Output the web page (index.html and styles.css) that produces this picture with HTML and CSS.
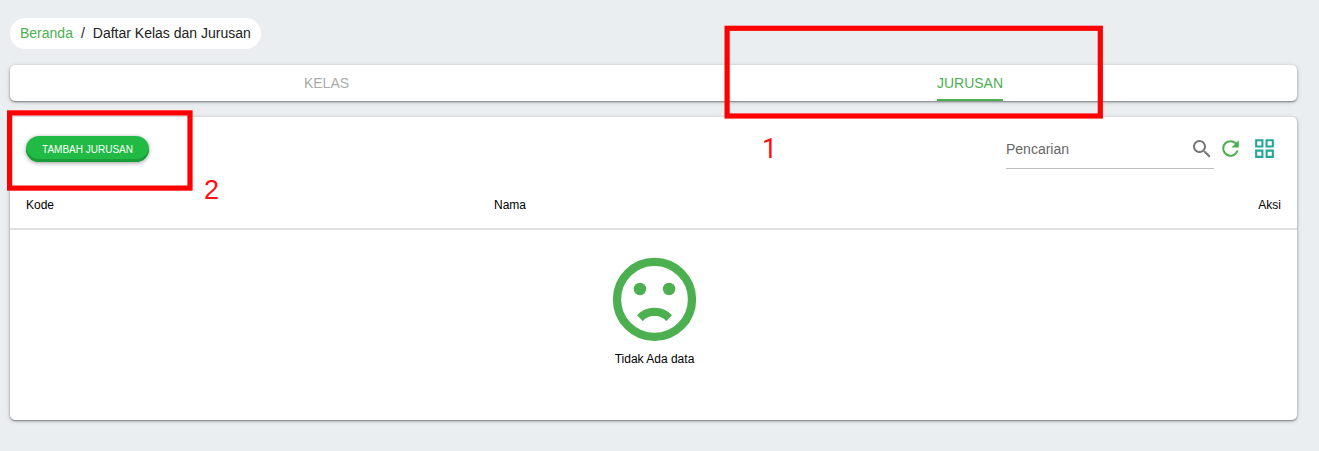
FILE: index.html
```html
<!DOCTYPE html>
<html lang="id">
<head>
<meta charset="utf-8">
<title>Daftar Kelas dan Jurusan</title>
<link rel="stylesheet" href="styles.css">
</head>
<body>
<main class="page">
  <nav class="breadcrumb"><a class="crumb-link">Beranda</a><span>/</span><span>Daftar Kelas dan Jurusan</span></nav>
  <div class="tabs panel">
    <div class="tab"><span class="tab-label">KELAS</span></div>
    <div class="tab"><span class="tab-label active">JURUSAN</span></div>
  </div>
  <section class="card panel">
    <div class="toolbar">
      <button class="add">TAMBAH JURUSAN</button>
      <div class="tools">
        <div class="search"><span>Pencarian</span>
          <svg class="icon" viewBox="0 0 24 24"><path d="M9.5 3A6.5 6.5 0 0 1 16 9.5C16 11.11 15.41 12.59 14.44 13.73L14.71 14H15.5L20.5 19L19 20.5L14 15.5V14.71L13.73 14.44A6.5 6.5 0 1 1 9.5 3M9.5 5A4.5 4.5 0 1 0 9.5 14A4.5 4.5 0 1 0 9.5 5Z"/></svg>
        </div>
        <svg class="icon refresh" viewBox="0 0 24 24"><path d="M17.65 6.35A7.96 7.96 0 0 0 12 4A8 8 0 1 0 19.73 14H17.65A6 6 0 1 1 12 6C13.66 6 15.14 6.69 16.22 7.78L13 11H20V4L17.65 6.35Z"/></svg>
        <svg class="icon grid" viewBox="0 0 24 24"><path d="M3 11H11V3H3M5 5H9V9H5M13 21H21V13H13M15 15H19V19H15M3 21H11V13H3M5 15H9V19H5M13 3V11H21V3M19 9H15V5H19Z" fill-rule="evenodd"/></svg>
      </div>
    </div>
    <div class="table-head"><span>Kode</span><span>Nama</span><span>Aksi</span></div>
    <div class="empty">
      <svg class="sad" viewBox="0.12 0.15 24 24"><circle cx="12" cy="12" r="9" fill="none" stroke="currentColor" stroke-width="2"/><circle cx="8.5" cy="9.5" r="1.5"/><circle cx="15.5" cy="9.5" r="1.5"/><path d="M12 14C13.75 14 15.29 14.72 16.19 15.81L14.77 17.23C14.32 16.5 13.25 16 12 16C10.75 16 9.68 16.5 9.23 17.23L7.81 15.81C8.71 14.72 10.25 14 12 14Z"/></svg>
      <span>Tidak Ada data</span>
    </div>
  </section>
</main>
<svg class="marks" viewBox="0 0 1319 451">
  <rect x="727.1" y="28.3" width="373.2" height="87.7"/>
  <rect x="9.6" y="112.9" width="180.4" height="75.2"/>
</svg>
<span class="num num-one">1</span>
<span class="num num-two">2</span>
</body>
</html>
```
FILE: styles.css
```css
* { box-sizing: border-box; }
body { margin: 0; height: 451px; overflow: hidden; background: #eaeef1; color: #000; font: 12px/16px "Liberation Sans", Arial, sans-serif; }
.page { display: flex; flex-direction: column; align-items: stretch; gap: 16px; padding: 18px 22px 0 10px; }
.breadcrumb { display: flex; align-self: flex-start; align-items: center; gap: 8px; height: 31px; padding: 0 10px 2px; border-radius: 16px; background: #fff; color: #212121; font-size: 14px; }
.crumb-link { color: #4caf50; }
.panel { background: #fff; border-radius: 5px; box-shadow: 0 1px 2px rgba(0,0,0,.42), 0 1px 5px rgba(0,0,0,.17); }
.tabs { display: flex; height: 36px; }
.tab { flex: 1; display: flex; justify-content: center; }
.tab:first-child { flex: 0 0 633px; }
.tab-label { height: 36px; line-height: 36px; font-size: 14px; color: #aaa; }
.active { color: #4caf50; border-bottom: 2px solid #4caf50; }
.card { height: 303px; }
.toolbar { display: flex; justify-content: space-between; height: 63px; padding: 12px 21px 0 16px; }
.add { width: 123px; height: 26px; margin-top: 7px; padding: 1px 0 0; border: 0; border-radius: 13px; background: #21ba45; color: #fff; font: 10px "Liberation Sans", Arial, sans-serif; box-shadow: inset 0 -3px #1b9c3b, 0 1px 4px rgba(0,0,0,.4); }
.tools { display: flex; align-items: flex-start; }
.search { display: flex; align-items: center; justify-content: space-between; width: 208px; height: 40px; border-bottom: 1px solid #bdbdbd; color: #666; font-size: 14px; }
.icon { width: 24px; height: 24px; fill: currentColor; }
.search .icon { color: #757575; }
.refresh { width: 25px; height: 25px; margin: 7px 0 0 4px; color: #4caf50; }
.grid { width: 25px; height: 25px; margin: 7px -1px 0 9px; color: #26a69a; }
.table-head { display: grid; grid-template-columns: 468px 1fr auto; align-items: center; height: 50px; padding: 2px 16px 0; border-bottom: 2px solid #e0e0e0; }
.empty { display: flex; flex-direction: column; align-items: center; padding: 20px 0 0 2px; }
.sad { width: 100px; height: 100px; margin-bottom: 1px; fill: currentColor; color: #4caf50; }
/* Numbered callouts over the page */
.marks { position: absolute; left: 0; top: 0; width: 1319px; height: 451px; fill: none; stroke: #f00; stroke-width: 5.2; pointer-events: none; }
.num { position: absolute; color: #ff1010; font-size: 27px; line-height: 30px; }
.num-one { left: 762px; top: 134px; font-family: Roboto, sans-serif; }
.num-two { left: 204px; top: 175px; }
```
